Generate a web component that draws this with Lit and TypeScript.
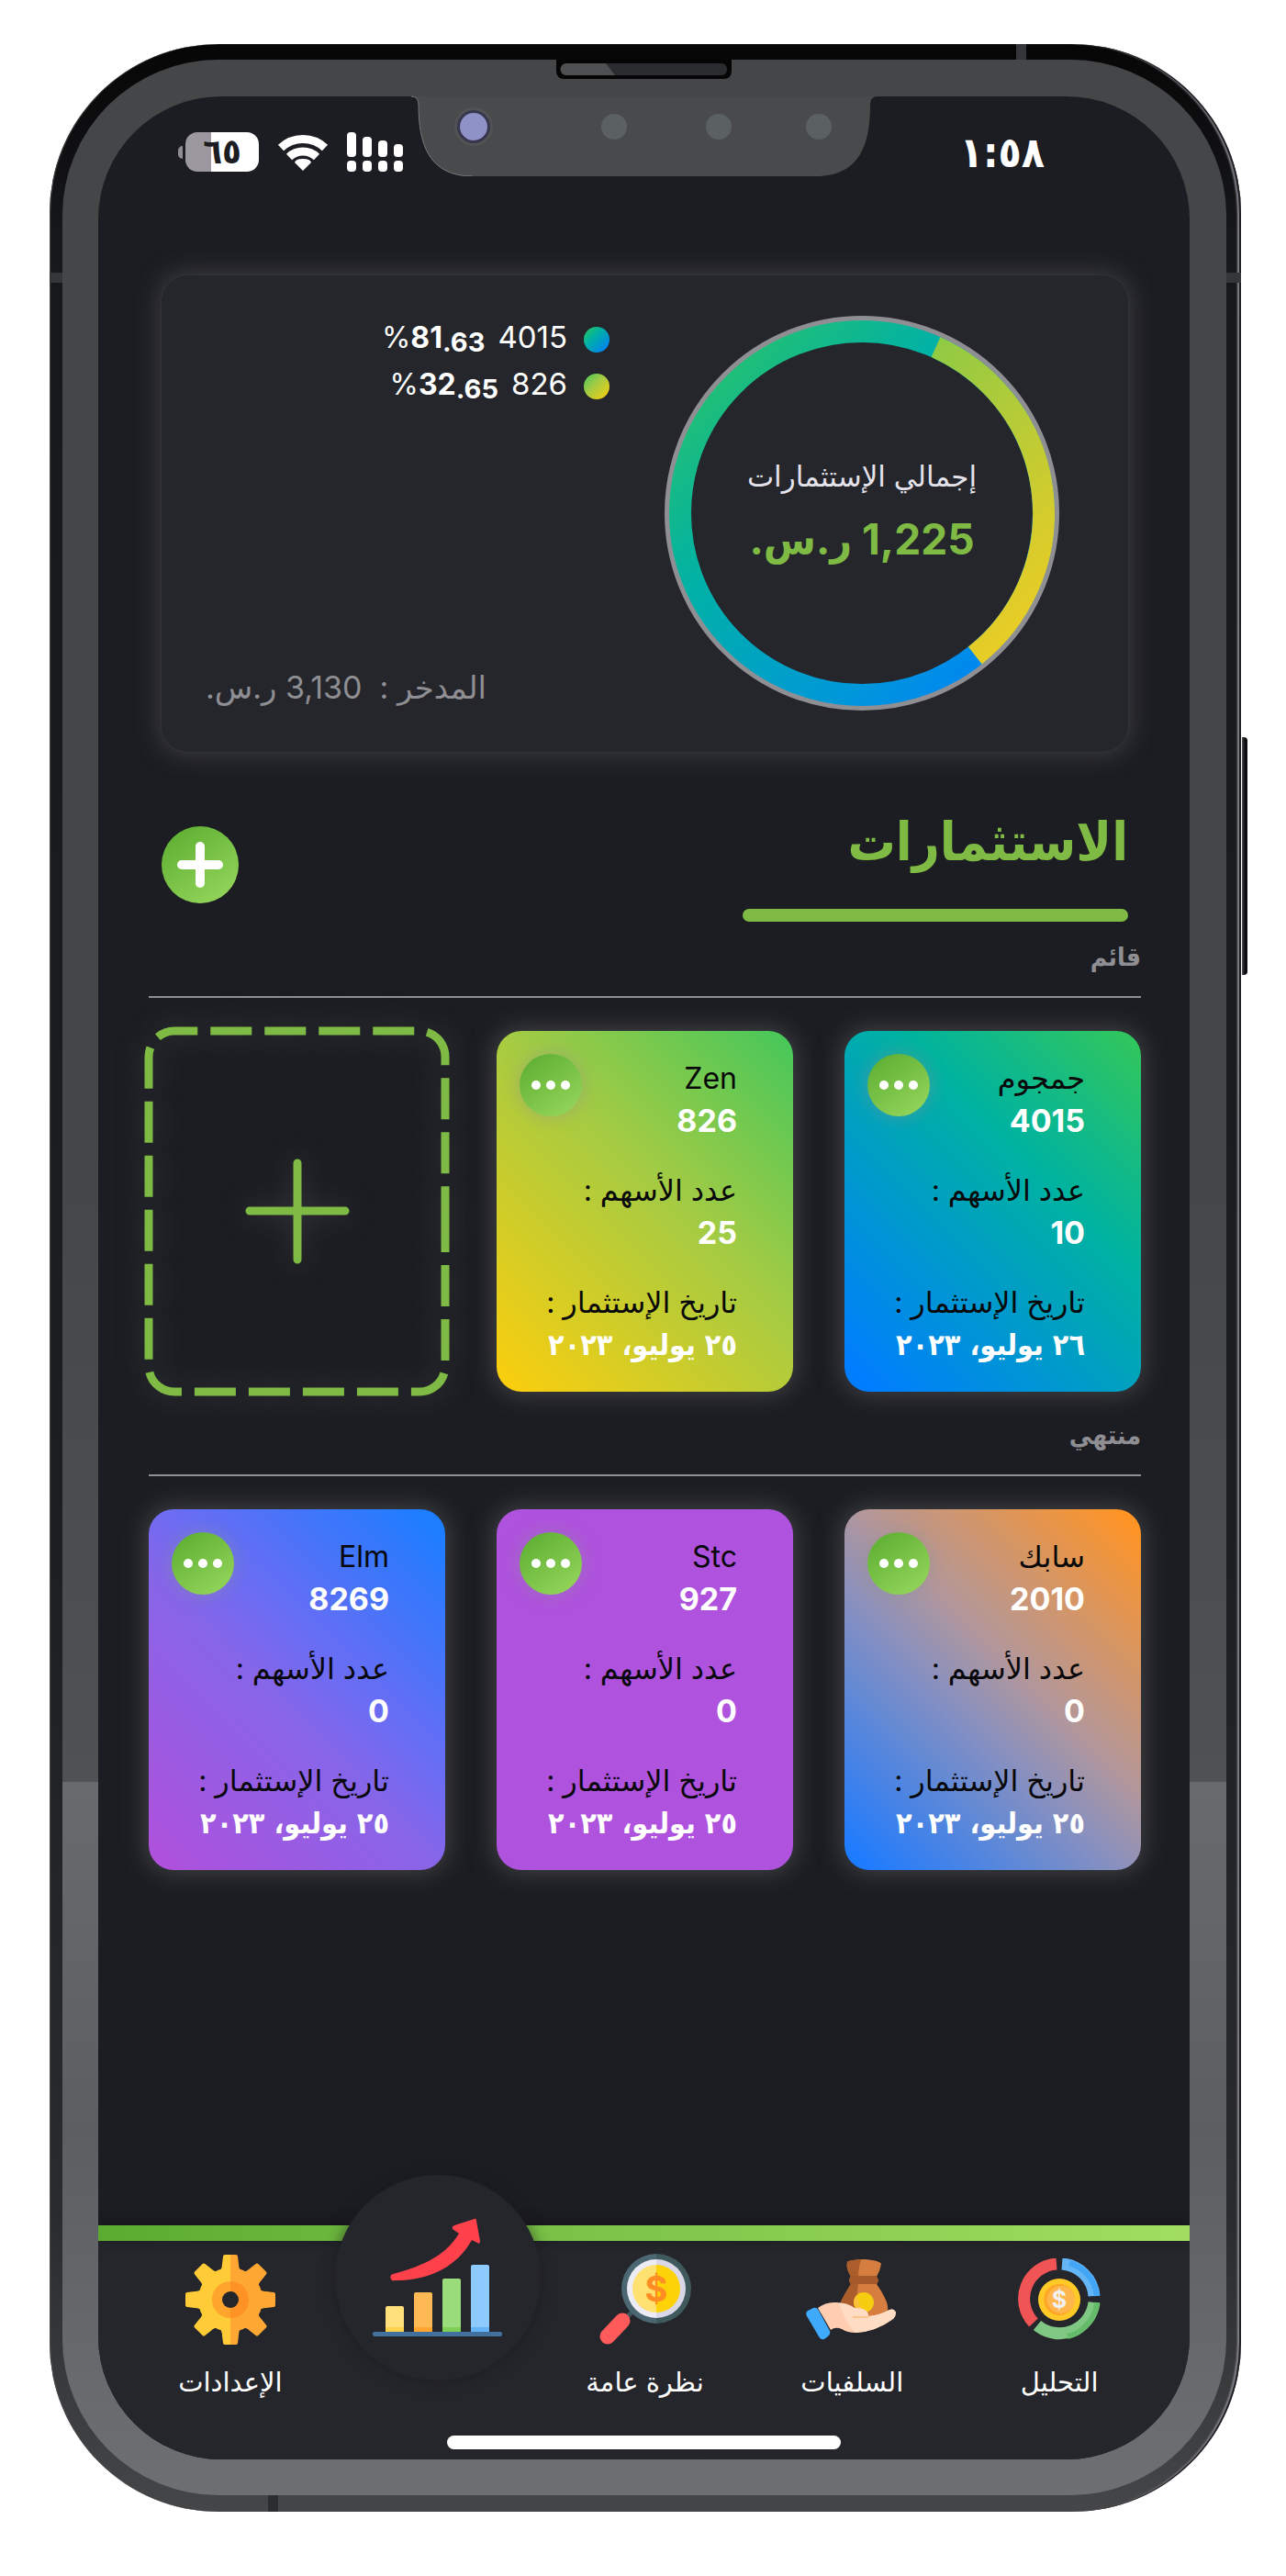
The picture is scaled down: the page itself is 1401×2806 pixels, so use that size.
import { LitElement, html, css, svg } from "lit";
import { customElement, property } from "lit/decorators.js";

interface Holding {
  name: string;
  code: string;
  shares: number;
  date: string;
  tone: string;
}

const ACTIVE: Holding[] = [
  { name: "جمجوم", code: "4015", shares: 10, date: "٢٦ يوليو، ٢٠٢٣", tone: "ocean" },
  { name: "Zen", code: "826", shares: 25, date: "٢٥ يوليو، ٢٠٢٣", tone: "lime" },
];

const CLOSED: Holding[] = [
  { name: "سابك", code: "2010", shares: 0, date: "٢٥ يوليو، ٢٠٢٣", tone: "sunset" },
  { name: "Stc", code: "927", shares: 0, date: "٢٥ يوليو، ٢٠٢٣", tone: "orchid" },
  { name: "Elm", code: "8269", shares: 0, date: "٢٥ يوليو، ٢٠٢٣", tone: "dusk" },
];

const LEGEND = [
  { code: "4015", whole: "81", fraction: ".63", tone: "ocean" },
  { code: "826", whole: "32", fraction: ".65", tone: "lime" },
];

const GEAR_ANGLES = [0, 45, 90, 135, 180, 225, 270, 315];

const gearBody = (fill: string, clip: string) => svg`
  <g fill=${fill} clip-path=${clip}>
    <circle cx="49" cy="50" r="35"></circle>
    ${GEAR_ANGLES.map(
      (a) => svg`<path d="M36 20 Q40 17 40 11 L41 3 Q41 1 43 1 H55 Q57 1 57 3 L58 11 Q58 17 62 20Z" transform="rotate(${a} 49 50)"></path>`
    )}
  </g>`;

const gearIcon = html`<svg class="icon" viewBox="0 0 98 100" width="98" height="100" aria-hidden="true">
  <clipPath id="gl"><rect width="49" height="100"></rect></clipPath>
  <clipPath id="gr"><rect x="49" width="49" height="100"></rect></clipPath>
  ${gearBody("#ffcb36", "url(#gl)")} ${gearBody("#ffa733", "url(#gr)")}
  <path d="M49 30a20 20 0 0 0 0 40z" fill="#ffa42c"></path>
  <path d="M49 30a20 20 0 0 1 0 40z" fill="#ff9224"></path>
  <circle cx="49" cy="50" r="9" fill="#25262b"></circle>
</svg>`;

const growthIcon = html`<svg viewBox="0 0 142 130" width="142" height="130" aria-hidden="true">
  <rect x="14" y="96" width="20" height="30" rx="2" fill="#ffe07a"></rect>
  <rect x="45" y="81" width="20" height="45" rx="2" fill="#ffb954"></rect>
  <rect x="76" y="66" width="20" height="60" rx="2" fill="#9adb7c"></rect>
  <rect x="107" y="51" width="20" height="75" rx="2" fill="#8ccaff"></rect>
  <rect x="14" y="119" width="20" height="5" fill="#ffd04c"></rect>
  <rect x="45" y="119" width="20" height="5" fill="#ffa42f"></rect>
  <rect x="76" y="119" width="20" height="5" fill="#7fce56"></rect>
  <rect x="107" y="119" width="20" height="5" fill="#63b3f5"></rect>
  <rect x="0" y="124" width="141" height="5" rx="2" fill="#42719f"></rect>
  <path d="M22 61C48 54 78 44 94 17L87 12Q86 9 89 8L111 1Q113 0 113 3L117 25Q117 29 114 27L108 24C92 52 64 68 24 68A3.500 3.500 0 0 1 22 61Z" fill="#ff414c"></path>
</svg>`;

const overviewIcon = html`<svg class="icon" viewBox="0 0 100 100" width="100" height="100" aria-hidden="true">
  <path d="M29 70l8-8" stroke="#3d565c" stroke-width="5"></path>
  <path d="M62 0a38 38 0 0 0 0 76z" fill="#4b6872"></path>
  <path d="M62 0a38 38 0 0 1 0 76z" fill="#3f595d"></path>
  <path d="M62 6a32 32 0 0 0 0 64z" fill="#ececf4"></path>
  <path d="M62 6a32 32 0 0 1 0 64z" fill="#dad8e8"></path>
  <path d="M62 12a26 26 0 0 0 0 52z" fill="#ffe172"></path>
  <path d="M62 12a26 26 0 0 1 0 52z" fill="#fdd209"></path>
  <text x="62" y="52" text-anchor="middle" class="coin" font-size="38" fill="#ff8d25">$</text>
  <path d="M9 90L25 73" stroke="#ff5b5a" stroke-width="17" stroke-linecap="round"></path>
</svg>`;

const advanceIcon = html`<svg class="icon" viewBox="0 0 100 90" width="100" height="90" aria-hidden="true">
  <path d="M45 4Q46 2 63 1Q80 2 82 6Q81 13 77 20L79 24L77 28Q88 44 89 52Q90 58 86 61Q72 66 60 62L37 50Q40 42 49 28L47 24L49 20Q43 10 45 4Z" fill="#d67d40"></path>
  <path d="M45 4Q46 2 60 1Q56 14 57 28Q54 48 56 60L37 50Q40 42 49 28L47 24L49 20Q43 10 45 4Z" fill="#ac5d2c"></path>
  <path d="M49 19H77Q80 24 77 28H49Q45 24 49 19Z" fill="#a6592b"></path>
  <circle cx="63" cy="48" r="11" fill="#f7cd12"></circle>
  <path d="M55 40A11 11 0 0 0 61 58Z" fill="#fbc23a"></path>
  <path d="M13 54Q22 47 33 48Q45 48 53 54Q68 54 68 63Q80 62 91 56Q96 54 98 59Q98 63 95 66Q76 80 54 81Q45 81 39 77Q32 74 27 78Z" fill="#ffcdb0"></path>
  <path d="M36 49Q45 49 53 54Q68 54 68 63Q80 62 91 56Q96 54 98 59Q98 63 95 66Q76 80 54 81Q44 72 36 49Z" fill="#ffdcc4"></path>
  <path d="M51 64H68" stroke="#ffc48f" stroke-width="2"></path>
  <path d="M2 57L8 54Q12 53 14 57L26 79Q27 83 24 85L20 88Q16 89 14 85L1 63Q-1 59 2 57Z" fill="#3fa9fb"></path>
</svg>`;

const analysisIcon = html`<svg class="icon" viewBox="0 0 90 90" width="90" height="90" aria-hidden="true">
  <g fill="none" stroke-width="13">
    <path d="M42 6A38 38 0 0 0 17 70" stroke="#f05454"></path>
    <path d="M48 6A38 38 0 0 1 83 41" stroke="#64b5f6"></path>
    <path d="M83 48A38 38 0 0 1 21 73" stroke="#81c784"></path>
  </g>
  <g fill="none" stroke-width="6">
    <path d="M56 5A42 42 0 0 1 86 41" stroke="#42a5f5"></path>
    <path d="M86 48A42 42 0 0 1 54 85" stroke="#66bb6a"></path>
  </g>
  <circle cx="45" cy="45" r="23" fill="#ffca28"></circle>
  <circle cx="45" cy="45" r="17" fill="#ffa726"></circle>
  <circle cx="47" cy="45" r="15" fill="#ffb74d"></circle>
  <text x="45" y="54" text-anchor="middle" class="coin" font-size="25" fill="#f1f1f3">$</text>
</svg>`;

const TABS = [
  { label: "التحليل", icon: analysisIcon, active: false },
  { label: "السلفيات", icon: advanceIcon, active: false },
  { label: "نظرة عامة", icon: overviewIcon, active: false },
  { label: "النمو", icon: growthIcon, active: true },
  { label: "الإعدادات", icon: gearIcon, active: false },
];

const tones = css`
  .ocean { background: linear-gradient(45deg, #007dff 4%, #00b39f 64%, #34c759 100%); }
  .lime { background: linear-gradient(45deg, #fdce0c, #a3cb44 57%, #44c75b); }
  .sunset { background: linear-gradient(45deg, #1c7bff 3%, #8b91bd 43%, #b3979a 57%, #ff9424 97%); }
  .orchid { background: #af52de; }
  .dusk { background: linear-gradient(45deg, #b150dc, #8765e8 45%, #6e6cf3 57%, #1d7dff 96%); }
`;

@customElement("status-bar")
export class StatusBar extends LitElement {
  static styles = css`
    :host {
      display: flex;
      direction: ltr;
      justify-content: space-between;
      align-items: center;
      height: 121px;
      padding: 0 158px 0 87px;
      color: #fff;
    }
    .cluster { display: flex; align-items: center; gap: 20px; }
    .cap { width: 5px; height: 14px; border-radius: 5px 0 0 5px; background: #8e8d92; }
    .battery { display: flex; align-items: center; gap: 3px; }
    .level {
      width: 80px;
      height: 43px;
      border-radius: 13px;
      background: linear-gradient(90deg, #9b999f 35%, #fff 35%);
      color: #1c1d22;
      text-align: center;
      font: 700 38px/43px "DejaVu Sans Condensed", "DejaVu Sans", sans-serif;
    }
    .time { font: 700 46px/58px "DejaVu Sans Condensed", "DejaVu Sans", sans-serif; }
    svg { display: block; }
  `;
  render() {
    return html`
      <div class="cluster">
        <div class="battery"><span class="cap"></span><span class="level">٦٥</span></div>
        <svg width="56" height="42" viewBox="0 0 56 42" fill="none" stroke="#fff" stroke-width="9" aria-hidden="true">
          <path d="M4 16A35 35 0 0 1 52 16"></path>
          <path d="M13 26A22 22 0 0 1 43 26"></path>
          <path d="M28 41L19 32Q20 28 28 28Q36 28 37 32Z" fill="#fff" stroke="none"></path>
        </svg>
        <svg width="62" height="44" viewBox="0 0 62 44" fill="#fff" aria-hidden="true">
          <rect x="0" y="0" width="10" height="27" rx="4"></rect>
          <rect x="17" y="5" width="10" height="22" rx="4"></rect>
          <rect x="34" y="9" width="10" height="18" rx="4"></rect>
          <rect x="51" y="13" width="10" height="14" rx="4"></rect>
          <rect x="0" y="31" width="10" height="12" rx="4"></rect>
          <rect x="17" y="31" width="10" height="12" rx="4"></rect>
          <rect x="34" y="31" width="10" height="12" rx="4"></rect>
          <rect x="51" y="31" width="10" height="12" rx="4"></rect>
        </svg>
      </div>
      <span class="time">١:٥٨</span>
    `;
  }
}

@customElement("summary-card")
export class SummaryCard extends LitElement {
  static styles = [
    tones,
    css`
      :host {
        display: flex;
        gap: 60px;
        margin: 74px 14px 0;
        padding: 44px 75px 45px 48px;
        border-radius: 28px;
        background: #25262b;
        box-shadow: 0 0 2px #3e3f43, 0 0 26px 3px #3c3d41;
      }
      .ring { display: grid; flex: none; place-items: center; }
      .ring > * { grid-area: 1 / 1; }
      .total { padding-bottom: 4px; text-align: center; }
      .caption { color: #e4e2ea; font-size: 31px; line-height: 60px; }
      .amount { color: #7fba45; font-family: Inter, "DejaVu Sans Condensed", "DejaVu Sans", sans-serif; font-size: 46px; font-weight: 700; line-height: 76px; }
      .side { display: flex; flex: 1; flex-direction: column; justify-content: space-between; }
      .legend { margin: 0; padding: 0; list-style: none; }
      .entry { display: flex; align-items: center; gap: 18px; height: 51px; color: #fff; font-size: 33px; line-height: 48px; }
      .dot { width: 28px; height: 28px; border-radius: 50%; transform: rotate(-90deg); }
      .pair { display: flex; gap: 14px; align-items: baseline; padding-bottom: 4px; }
      .pct { font-size: 32px; }
      .frac { font-size: 29px; font-weight: 700; vertical-align: -4px; line-height: 30px; }
      .saved { align-self: flex-end; color: #8e8e93; font-size: 34px; line-height: 50px; white-space: pre; }
    `,
  ];
  render() {
    return html`
      <div class="ring">
        <svg width="430" height="430" viewBox="0 0 430 430" fill="none" aria-hidden="true">
          <linearGradient id="sea" gradientUnits="userSpaceOnUse" x1="0" y1="0" x2="430" y2="430">
            <stop offset="0" stop-color="#34c759"></stop>
            <stop offset=".38" stop-color="#00b1a6"></stop>
            <stop offset=".7" stop-color="#0098d8"></stop>
            <stop offset=".9" stop-color="#0082f8"></stop>
          </linearGradient>
          <linearGradient id="sun" gradientUnits="userSpaceOnUse" x1="0" y1="0" x2="430" y2="430">
            <stop offset="0" stop-color="#48c85c"></stop>
            <stop offset=".9" stop-color="#f3cd22"></stop>
          </linearGradient>
          <circle cx="215" cy="215" r="212" stroke="#8e8e93" stroke-width="6"></circle>
          <circle cx="215" cy="215" r="198" stroke="url(#sea)" stroke-width="24"></circle>
          <path d="M295.500 34.100A198 198 0 0 1 338.300 370" stroke="url(#sun)" stroke-width="24"></path>
        </svg>
        <div class="total">
          <div class="caption">إجمالي الإستثمارات</div>
          <div class="amount">1,225 ر.س.</div>
        </div>
      </div>
      <div class="side">
        <ul class="legend">
          ${LEGEND.map(
            (l) => html`<li class="entry">
              <span class="dot ${l.tone}"></span>
              <span class="pair"><span>${l.code}</span><span class="pct" dir="ltr">%<b>${l.whole}</b><span class="frac">${l.fraction}</span></span></span>
            </li>`
          )}
        </ul>
        <div class="saved">المدخر :  3,130 ر.س.</div>
      </div>
    `;
  }
}

@customElement("holding-card")
export class HoldingCard extends LitElement {
  @property({ attribute: false }) item!: Holding;

  static styles = [
    tones,
    css`
      :host { display: block; }
      .card {
        position: relative;
        padding: 29px 61px 28px 40px;
        border-radius: 27px;
        box-shadow: 0 0 26px 3px #424347;
        font-size: 32px;
        line-height: 46px;
        white-space: nowrap;
      }
      .fields { display: grid; gap: 30px; margin: 0; }
      .fields dt { color: #08080a; }
      .fields dd { margin: 0; color: #fff; font-size: 34px; font-weight: 700; }
      .fields .date { font-family: "DejaVu Sans Condensed", "DejaVu Sans", sans-serif; font-size: 32px; }
      .more {
        position: absolute;
        top: 25px;
        left: 25px;
        display: grid;
        place-items: center;
        width: 68px;
        height: 68px;
        padding: 0;
        border: 0;
        border-radius: 50%;
        background: linear-gradient(145deg, #5fb034 10%, #9ad95f);
        box-shadow: 0 0 18px 2px #8e8e9366;
        cursor: pointer;
      }
    `,
  ];
  render() {
    const h = this.item;
    return html`<article class="card ${h.tone}">
      <dl class="fields">
        <div><dt>${h.name}</dt><dd>${h.code}</dd></div>
        <div><dt>عدد الأسهم :</dt><dd>${h.shares}</dd></div>
        <div><dt>تاريخ الإستثمار :</dt><dd class="date">${h.date}</dd></div>
      </dl>
      <button class="more" aria-label="خيارات">
        <svg width="44" height="12" viewBox="0 0 44 12" fill="#fff" aria-hidden="true">
          <circle cx="6" cy="6" r="5"></circle><circle cx="22" cy="6" r="5"></circle><circle cx="38" cy="6" r="5"></circle>
        </svg>
      </button>
    </article>`;
  }
}

@customElement("tab-bar")
export class TabBar extends LitElement {
  static styles = css`
    :host { display: block; background: #25262b; }
    .stripe { height: 17px; background: linear-gradient(90deg, #5bab31, #7cc348 45%, #a1de60); box-shadow: 0 -4px 14px #15161a; }
    .tabs { display: grid; grid-template-columns: repeat(5, 1fr); margin: 0; padding: 14px 29px 0 31px; list-style: none; }
    .tab { display: flex; flex-direction: column; align-items: center; gap: 20px; color: #fff; font-size: 29px; line-height: 40px; text-decoration: none; white-space: nowrap; }
    .holder { display: grid; place-items: center; height: 100px; }
    .current {
      position: relative;
      display: grid;
      place-items: center;
      width: 224px;
      height: 224px;
      margin: -86px auto -60px;
      border-radius: 50%;
      background: #25262b;
      box-shadow: 0 0 16px #17181c99;
    }
    .coin { font-family: Inter, sans-serif; font-weight: 700; }
    .home { width: 36%; height: 15px; margin: 38px auto 0; border-radius: 8px; background: #fff; }
    .foot { padding-bottom: 11px; }
  `;
  render() {
    return html`<nav class="foot">
      <div class="stripe"></div>
      <ul class="tabs">
        ${TABS.map((t) =>
          t.active
            ? html`<li><a class="current" href="#growth" aria-label=${t.label} aria-current="page">${t.icon}</a></li>`
            : html`<li><a class="tab" href="#tab"><span class="holder">${t.icon}</span><span>${t.label}</span></a></li>`
        )}
      </ul>
      <div class="home"></div>
    </nav>`;
  }
}

@customElement("app-root")
export class AppRoot extends LitElement {
  static styles = css`
    :host {
      display: flex;
      box-sizing: border-box;
      min-height: 100vh;
      padding: 48px 49px 70px 54px;
      background: #fff;
      font-family: Inter, "DejaVu Sans", sans-serif;
    }
    .phone {
      position: relative;
      display: flex;
      flex: 1;
      padding: 17px 16px 18px 14px;
      border-radius: 184px;
      background: linear-gradient(#060607, #17181a 8%, #1d1e21 60%, #2a2b2d 88%, #454648);
      box-shadow: inset -2px 0 1px #1b1b1e, inset -5px 0 2px -1px #8b8c94, inset 1px 0 1px #4a4b4e;
    }
    .antenna { position: absolute; background: #34363a; }
    .antenna.top { top: 0; right: 234px; width: 11px; height: 17px; }
    .antenna.left { top: 249px; left: 0; width: 14px; height: 11px; }
    .antenna.right { top: 249px; right: 0; width: 16px; height: 11px; }
    .antenna.bottom { bottom: 0; left: 238px; width: 11px; height: 18px; background: #2c2d30; }
    .key { position: absolute; top: 755px; right: -7px; width: 6px; height: 259px; border-radius: 0 4px 4px 0; background: linear-gradient(90deg, #55575c, #0d0d0f 50%); }
    .bezel {
      position: relative;
      display: flex;
      flex: 1;
      padding: 40px 40px 39px 39px;
      border-radius: 170px;
      background: linear-gradient(#454648, #454648 45%, #505152 70.700%, #676b6e 70.700%, #5c5f62 85%, #6c7072);
    }
    .screen {
      display: flex;
      flex: 1;
      flex-direction: column;
      overflow: hidden;
      border-radius: 134px;
      background: #1c1d22;
    }
    .notch { position: absolute; top: 0; left: 50%; width: 508px; height: 127px; margin-left: -254px; }
    .main { flex: 1; padding: 0 53px 60px 55px; }
    .head { display: flex; justify-content: space-between; align-items: flex-start; margin: 51px 14px 15px; }
    .title { margin: 0; color: #7fba45; font-family: "DejaVu Sans Condensed", "DejaVu Sans", sans-serif; font-size: 58px; font-weight: 700; line-height: 94px; }
    .bar { width: 420px; height: 14px; margin-top: 26px; border-radius: 7px; background: #7fba45; }
    .add { display: grid; place-items: center; width: 84px; height: 84px; margin-top: 30px; padding: 0; border: 0; border-radius: 50%; background: linear-gradient(145deg, #5fb034 10%, #9ad95f); cursor: pointer; }
    .label { margin: 0; padding-bottom: 18px; border-bottom: 2px solid #8e8e93; color: #8e8e93; font-family: "DejaVu Sans Condensed", "DejaVu Sans", sans-serif; font-size: 28px; font-weight: 700; line-height: 48px; }
    .group + .group { margin-top: 24px; }
    .cards { display: grid; grid-template-columns: repeat(3, 1fr); gap: 56px; padding-top: 36px; }
    .blank { position: relative; padding: 0; border: 0; background: none; cursor: pointer; }
    .outline { position: absolute; inset: 0; width: 100%; height: 100%; overflow: visible; filter: drop-shadow(0 0 14px #5a5b6080); }
  `;

  render() {
    return html`
      <div class="phone" dir="rtl">
        <span class="antenna top"></span><span class="antenna left"></span>
        <span class="antenna right"></span><span class="antenna bottom"></span>
        <span class="key"></span>
        <div class="bezel">
          <div class="screen">
            <status-bar></status-bar>
            <main class="main">
              <summary-card></summary-card>
              <header class="head">
                <div>
                  <h1 class="title">الاستثمارات</h1>
                  <div class="bar"></div>
                </div>
                <button class="add" aria-label="إضافة">
                  <svg width="50" height="50" viewBox="0 0 50 50" stroke="#fff" stroke-width="10" stroke-linecap="round" aria-hidden="true">
                    <path d="M5 25H45M25 5V45"></path>
                  </svg>
                </button>
              </header>
              <section class="group">
                <h2 class="label">قائم</h2>
                <div class="cards">
                  ${ACTIVE.map((h) => html`<holding-card .item=${h}></holding-card>`)}
                  <button class="blank" aria-label="إضافة استثمار">
                    <svg class="outline" viewBox="0 0 323 393" preserveAspectRatio="none" fill="none" stroke="#7fba45" stroke-width="9" aria-hidden="true">
                      <path d="M323 196V365A28 28 0 0 1 295 393H28A28 28 0 0 1 0 365V28A28 28 0 0 1 28 0H295A28 28 0 0 1 323 28Z" stroke-dasharray="45 14"></path>
                      <path d="M110 196H214M162 144V249" stroke-linecap="round"></path>
                    </svg>
                  </button>
                </div>
              </section>
              <section class="group">
                <h2 class="label">منتهي</h2>
                <div class="cards">${CLOSED.map((h) => html`<holding-card .item=${h}></holding-card>`)}</div>
              </section>
            </main>
            <tab-bar></tab-bar>
          </div>
          <svg class="notch" viewBox="0 0 508 127" aria-hidden="true">
            <path d="M0 40H508Q500 40 500 49C500 90 490 127 441 127H67C18 127 8 90 8 49Q8 40 0 40Z" fill="#484a4b"></path>
            <path d="M0 40Q8 40 8 49C8 90 18 127 67 127" fill="none" stroke="#77787a" stroke-width="1"></path>
            <path d="M158 0H349V12Q349 21 340 21H167Q158 21 158 12Z" fill="#050506"></path>
            <rect x="163" y="4" width="181" height="13" rx="6" fill="#2b2c2f"></rect>
            <path d="M169 4H212L222 17H169A6 6 0 0 1 169 4Z" fill="#4e5051"></path>
            <circle cx="68" cy="73" r="21" fill="#515355"></circle>
            <circle cx="68" cy="73" r="18" fill="#37364d"></circle>
            <circle cx="68" cy="73" r="15" fill="#8f92c6"></circle>
            <g fill="#5b6063">
              <circle cx="221" cy="73" r="14"></circle><circle cx="335" cy="73" r="14"></circle><circle cx="444" cy="73" r="14"></circle>
            </g>
          </svg>
        </div>
      </div>
    `;
  }
}
